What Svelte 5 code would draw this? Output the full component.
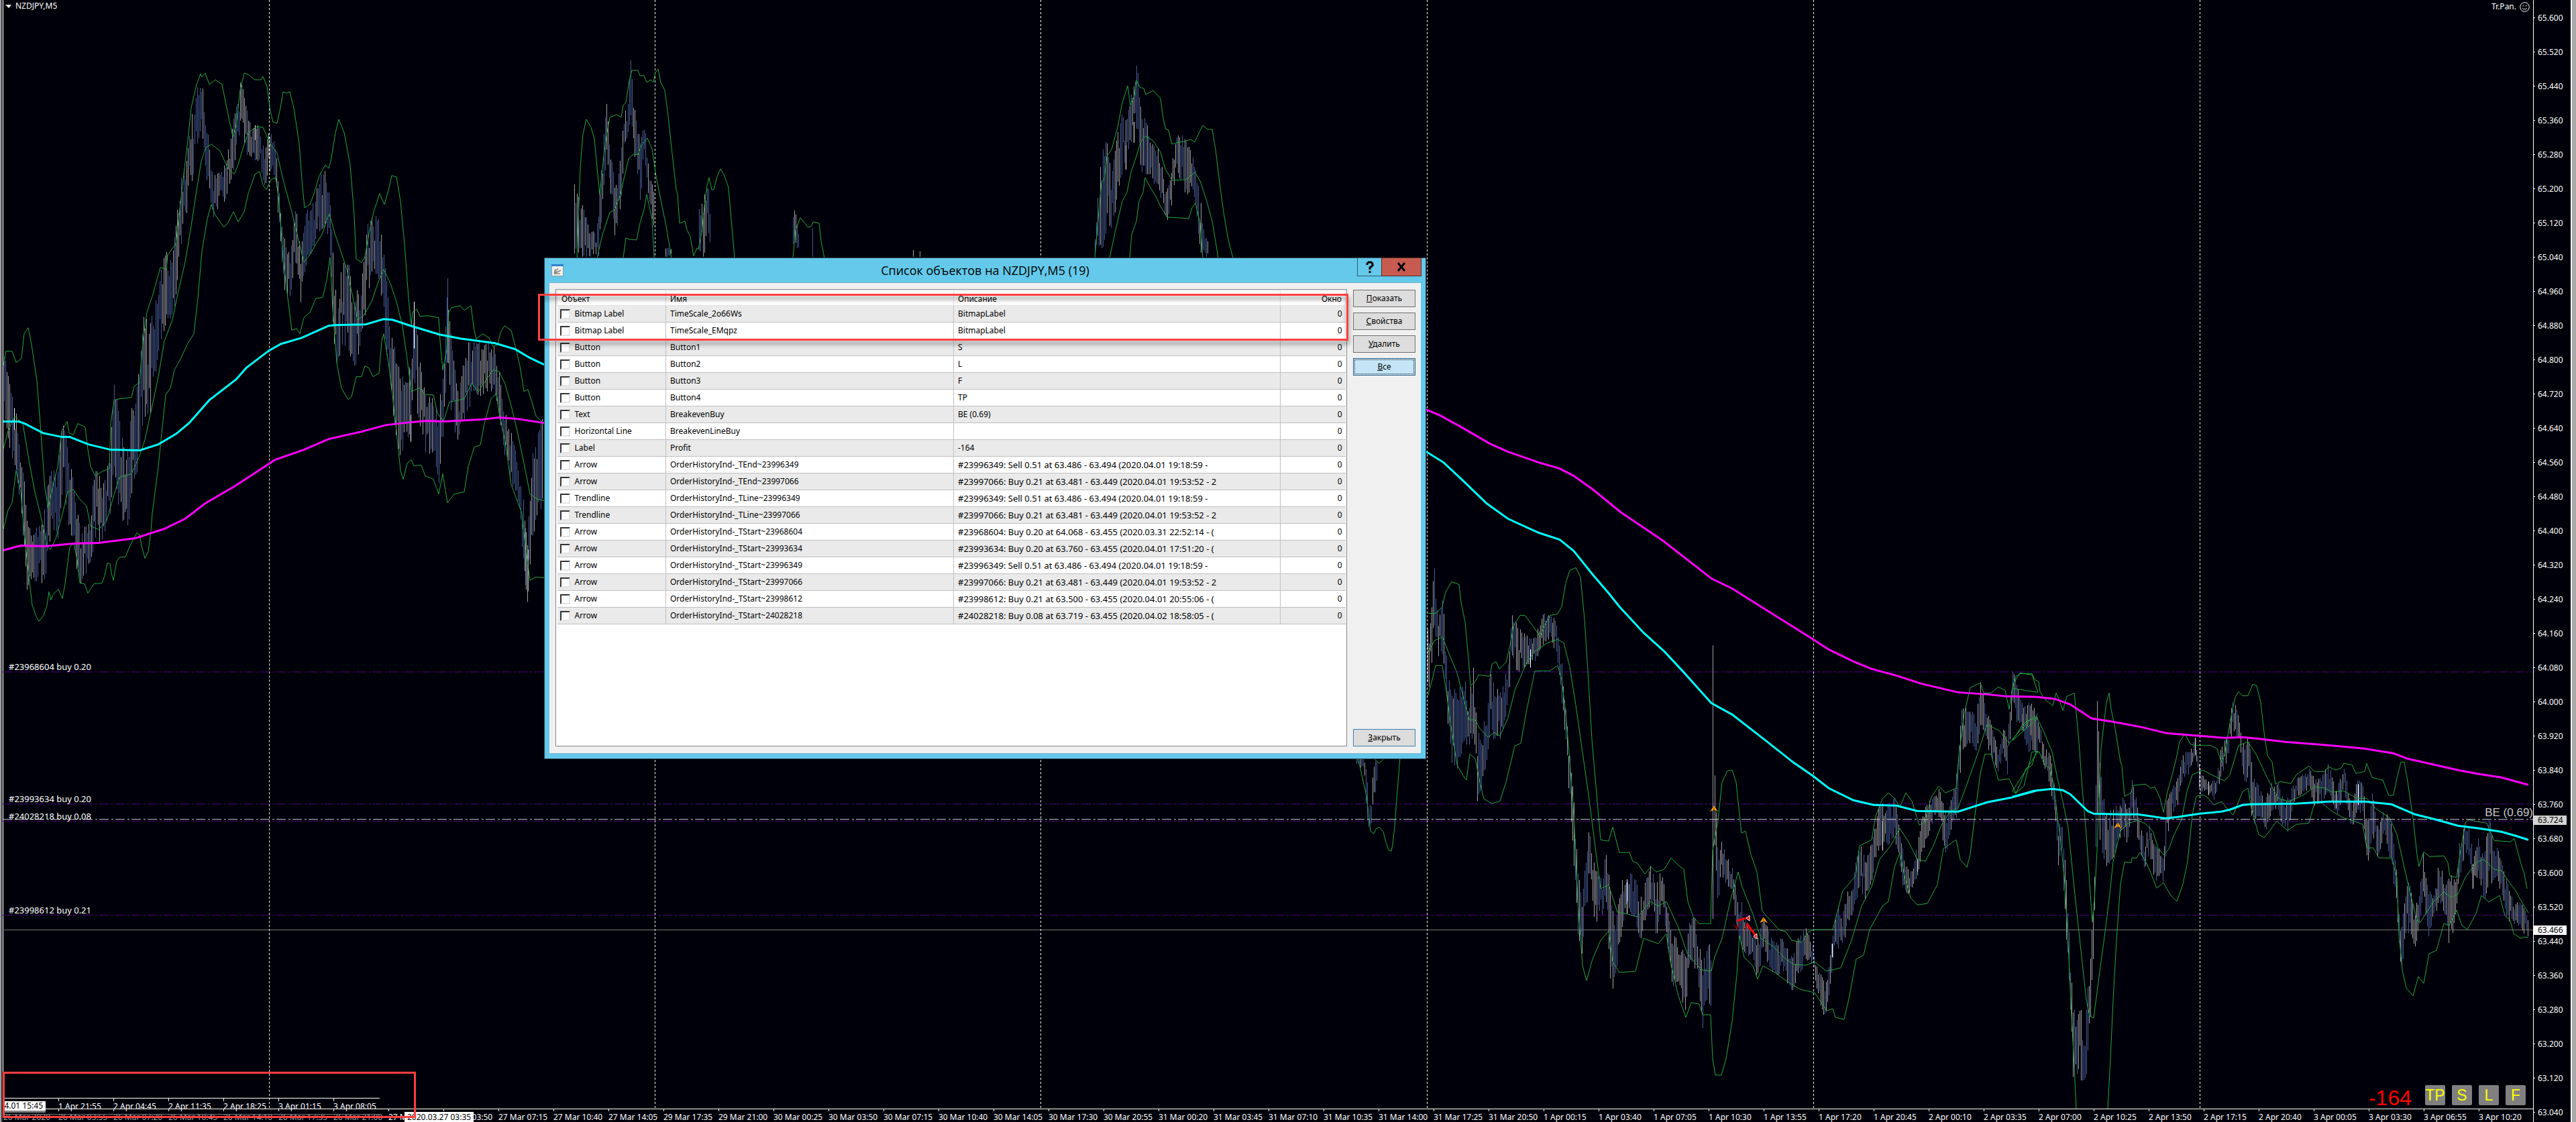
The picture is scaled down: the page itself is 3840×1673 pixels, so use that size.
<script>
  // Plot panels: origin and units per pixel of each traced section of the series.
  const A = { x: 0, y: 0, sx: 1.6333, sy: 1.8667 };
  const B = { x: 0, y: 780, sx: 1.8667, sy: 2.529 };
  const C = { x: 800, y: 0, sx: 1.42545, sy: 3 };
  const D = { x: 2080, y: 580, sx: 1.6333, sy: 1.568 };
  const E = { x: 3000, y: 900, sx: 1.8667, sy: 2.0285 };
  const F = { x: 1980, y: 1060, sx: 3, sy: 3 };

  const px = (p, x) => Math.round(p.x + x / p.sx);
  const py = (p, y) => Math.round(p.y + y / p.sy);
  const points = (p, s) =>
    s.trim().split(/\s+/).map((t) => {
      const [x, y] = t.split(',').map(Number);
      return `${px(p, x)},${py(p, y)}`;
    });
  const line = (...parts) => {
    let all = [];
    for (let i = 0; i < parts.length; i += 2) all = all.concat(points(parts[i], parts[i + 1]));
    return 'M' + all.join('L');
  };

  const bands = [
    line(A, '8,1020 15,978 30,978 40,1010 52,998 58,930 68,912 76,960 90,1060 98,1180 110,1360 118,1415 128,1360 140,1300 150,1200 163,1175 168,1205 178,1212 190,1180 208,1190 213,1240 220,1300 232,1325 250,1312 266,1305 270,1180 278,1115 290,1110 320,1107 326,1075 340,1065 348,950 358,870 372,820 390,745 405,750 408,710 428,680 436,600 446,500 458,390 466,300 478,235 488,205 492,215 500,203 510,235 525,222 540,235 552,300 566,380 575,350 584,250 595,203 605,208 620,222 635,222 640,212 650,240 658,310 665,340 675,343 682,300 690,255 698,259 706,255 716,300 728,400 735,500 742,578 755,570 765,540 778,490 792,460 800,468 806,450 816,370 824,332 838,370 852,460 862,600 868,720 880,732 888,715 898,650 910,590 924,540 936,570 946,530 954,490 966,492 975,560 985,680 995,830 1001,905 1005,870 1015,860 1022,882 1040,880 1068,885 1072,950 1078,1030 1088,975 1092,870 1100,857 1120,852 1130,865 1146,852 1155,920 1160,945 1175,930 1190,940 1200,965 1212,960 1218,925 1228,908 1245,920 1256,970 1265,1020 1275,1090 1285,1085 1295,1120 1305,1160 1325,1180'),
    line(A, '8,1250 20,1200 36,1160 55,1180 70,1280 85,1370 100,1440 115,1520 122,1530 135,1500 150,1440 165,1370 178,1362 195,1390 210,1410 220,1465 240,1475 260,1450 275,1390 290,1330 320,1320 340,1270 352,1225 370,1130 385,1050 400,950 420,890 435,810 450,730 465,630 478,530 490,450 500,412 515,402 535,420 555,470 570,485 580,460 590,420 605,370 625,352 640,355 660,405 675,425 690,500 710,590 725,660 740,730 755,710 770,680 785,650 795,610 802,595 815,650 830,700 845,750 858,820 870,890 885,880 905,840 920,790 935,750 950,790 965,840 980,910 992,1000 1002,1090 1020,1080 1035,1100 1055,1100 1065,1150 1080,1175 1095,1120 1130,1110 1148,1068 1165,1090 1180,1065 1200,1030 1215,1035 1230,1070 1245,1130 1260,1200 1275,1290 1290,1375 1310,1390 1325,1395'),
    line(
      A, '8,1475 20,1420 30,1400 40,1310 50,1370 56,1440',
      B, '65,0 68,40 78,180 90,310 100,355 108,373 122,350 130,310 137,260 141,290 148,270 163,250 173,285 182,230 190,130 195,90 205,78 215,140 223,228 236,230 244,265 262,230 283,228 292,200 299,152 306,155 310,190 316,218 325,145 334,130 350,130 360,90 372,60 380,38 388,45 396,95 404,133 412,110 420,30',
      A, '371,1430 385,1300 395,1190 403,1100 415,1080 425,1030 440,1000 455,960 472,930 482,830 492,700 505,610 515,570 525,600 545,632 555,620 568,590 580,618 595,590 605,540 620,485 632,478 640,515 648,528 660,500 672,495 680,560 690,720 700,830 710,920 722,915 730,930 740,885 755,870 770,830 786,828 795,780 803,717 810,860 820,1010 832,1080 848,1113 856,1105 868,1050 880,1050 888,1020 898,1025 908,1050 922,1040 930,950 935,930 945,1010 955,1100 965,1200 975,1310 982,1335 992,1290 1002,1280 1008,1298 1025,1295 1035,1325 1055,1335 1068,1375 1078,1320 1090,1400 1105,1375 1130,1370 1140,1300 1155,1245 1170,1240 1180,1180 1195,1110 1208,1095 1215,1150 1230,1230 1245,1350 1270,1430',
      B, '1455,0 1460,60 1468,140 1475,218 1490,205 1515,208'
    ),
    line(C, '86,1155 92,750 98,600 105,535 115,570 122,620 128,750 134,870 142,700 148,610 155,525 170,512 180,525 184,470 190,460 196,360 202,316 215,314 220,338 228,338 234,368 242,358 248,370 252,325 258,310 264,370 272,405 280,520 286,660 296,850 300,870 304,1000 315,990 320,1030 326,1060 333,1145 340,1110 344,1115 350,1040 356,920 362,830 367,795 372,850 377,850 384,790 391,755 398,780 408,840 414,980 420,1155'),
    line(C, '545,1155 550,1030 560,975 570,1000 576,1018 583,1015 587,993 600,1000 605,1080 611,1155'),
    line(C, '1186,1155 1192,1010 1200,815 1206,805 1212,700 1222,670 1235,570 1245,460 1256,385 1262,470 1270,430 1275,360 1282,390 1290,395 1294,422 1310,405 1325,440 1332,530 1337,578 1343,582 1350,645 1360,640 1375,633 1390,625 1398,635 1404,610 1416,562 1425,580 1436,580 1443,670 1452,840 1460,950 1470,1075 1480,1155'),
    line(C, '128,1155 140,1050 155,950 165,940 178,870 185,800 195,710 205,690 215,693 222,650 235,618 245,665 254,790 265,910 275,1010 286,1155'),
    line(C, '1217,1155 1230,1030 1245,900 1255,860 1263,770 1275,700 1283,640 1293,610 1310,630 1325,680 1335,755 1350,808 1380,805 1398,772 1410,810 1422,890 1435,990 1448,1155'),
    line(C, '184,1155 190,1065 197,1070 213,1075 220,1000 228,940 234,870 245,980 250,1155'),
    line(C, '1260,1155 1264,1050 1275,990 1280,900 1288,860 1293,795 1300,825 1315,880 1325,925 1340,972 1385,978 1392,930 1400,910 1410,1000 1416,1155'),
    line(F, '130,210 145,260 160,330 170,380 180,460 190,540 203,553 212,530 228,523 245,543 258,590 270,625 281,630 288,600 296,520 306,400 322,210'),
    line(F, '208,218 227,238 245,218'),
    line(
      D, '78,525 100,525 115,510 122,475 137,452 155,458 160,500 170,545 178,630 183,695 195,685 203,670 230,672 236,645 245,638 253,655 270,640 280,600 288,555 303,530 315,530 335,555 352,580 362,555 378,530 395,527 405,510 415,455 424,425 440,418 450,440 460,540 468,660 478,820 488,930 500,1055 520,1058 530,1025 545,1085 570,1085 578,1105 590,1110 608,1135 622,1118 635,1130 655,1125 672,1098 690,1115 703,1125 712,1200 725,1235 740,1252 768,1252 773,1080 785,1010 795,920 808,893 820,892 830,920 842,1040 852,1035 865,1090 880,1130 893,1222 905,1235 920,1250 935,1265 950,1270 965,1290 990,1295 1005,1272 1018,1265 1065,1265 1075,1230 1090,1175 1120,1140 1130,1070 1160,1055 1170,1000 1185,960 1200,945 1215,958 1228,978 1243,945 1258,965 1275,1020 1288,1015 1305,955 1323,930 1340,945 1365,935 1372,860 1385,760 1400,700 1425,688 1433,712 1450,712 1468,697 1485,705 1495,750 1505,690 1520,665 1550,670 1565,710',
      E, '0,258 10,222 22,212 55,214 62,232 72,238 76,268 90,290 112,310 122,272 130,295 140,325 152,282 172,272 178,330 185,420 195,560 205,700 214,850 222,965 228,900 235,750 240,580 247,440 255,350 262,300 268,272 275,320 285,380 300,480 305,490 312,585 330,575 335,552 370,548 385,560 395,555 410,590 420,632 432,570 445,520 455,470 465,420 480,395 495,425 505,430 550,430 570,440 580,480 590,460 600,400 610,330 620,285 630,267 640,280 655,280 668,246 680,250 690,300 700,390 710,460 722,480 732,548 745,540 775,545 790,520 825,492 840,510 870,510 880,495 900,505 915,500 922,485 945,488 955,515 980,510 986,485 1000,528 1030,535 1048,582 1060,580 1070,530 1080,480 1090,480 1100,540 1115,650 1125,760 1132,797 1145,752 1162,767 1200,765 1212,785 1217,825 1235,830 1245,760 1260,665 1270,655 1285,660 1320,665 1340,718 1385,722 1397,712 1415,790 1425,820 1432,865'
    ),
    line(
      D, '78,620 95,590 115,580 130,620 150,665 165,720 180,775 195,775 205,795 225,815 240,805 255,812 275,770 290,705 320,640 340,615 370,595 395,587 410,595 425,650 440,740 455,850 470,950 485,1060 500,1170 520,1160 540,1225 560,1228 590,1235 620,1200 640,1210 660,1200 690,1260 710,1320 745,1360 770,1362 778,1330 795,1285 815,1200 835,1130 845,1165 870,1230 890,1285 920,1305 950,1335 970,1347 1000,1348 1020,1340 1050,1362 1085,1355 1110,1290 1135,1210 1160,1165 1180,1100 1205,1070 1228,1028 1250,1060 1270,1100 1290,1105 1310,1070 1330,1020 1350,990 1370,980 1390,930 1420,850 1440,785 1470,800 1495,830 1520,800 1545,775 1565,770',
      E, '0,415 30,365 65,340 85,385 110,450 125,530 140,600 155,680 165,780 175,900 190,1050 205,1200 215,1250 225,1255 240,1130 255,1010 270,880 280,780 300,690 320,668 350,658 370,668 390,690 405,740 420,760 435,745 450,700 470,655 485,570 500,520 530,505 555,520 590,538 605,520 630,430 655,420 680,460 710,530 740,590 770,600 810,580 840,555 870,560 890,572 920,568 960,590 985,590 1010,620 1050,650 1070,700 1090,800 1105,870 1125,960 1135,965 1150,940 1170,905 1200,875 1220,890 1240,880 1260,830 1290,785 1310,775 1340,805 1360,810 1380,840 1400,870 1420,910 1435,938'
    ),
    line(
      D, '78,720 90,680 98,647 115,648 125,720 135,790 150,880 165,905 173,915 182,855 195,865 205,920 215,960 235,970 255,965 270,920 290,835 305,830 320,750 340,660 375,660 395,647 405,680 415,760 425,870 435,1000 445,1200 455,1350 465,1385 480,1335 500,1290 520,1268 530,1340 545,1365 585,1362 605,1285 640,1298 660,1275 670,1340 690,1420 707,1470 720,1437 740,1440 748,1465 768,1465 773,1568 779,1606 794,1606 806,1568 820,1480 832,1370 838,1280 850,1330 870,1350 882,1382 895,1350 925,1365 950,1385 985,1405 1020,1412 1050,1455 1065,1450 1072,1470 1092,1475 1105,1420 1122,1335 1140,1325 1155,1265 1185,1210 1200,1200 1215,1120 1228,1085 1240,1140 1255,1190 1270,1208 1295,1205 1320,1160 1335,1075 1365,1055 1375,1100 1392,1120 1400,1090 1410,1010 1425,900 1435,855 1450,855 1468,915 1495,912 1510,945 1530,930 1550,850 1565,848',
      E, '0,568 10,576 25,540 38,502 55,490 65,450 75,450 90,490 105,500 115,560 125,650 135,720 145,850 155,1030 165,1250 172,1400 178,1530'
    ),
    line(E, '266,1530 272,1380 280,1200 290,1020 300,850 312,782 330,785 332,770 345,770 355,755 368,775 385,815 402,862 420,845 440,885 458,903 475,850 488,780 500,640 512,585 530,580 545,590 560,610 582,600 600,625 615,640 640,570 655,560 665,620 685,700 700,710 715,690 735,660 765,688 790,670 825,665 840,605 860,605 890,630 920,650 950,660 975,670 985,740 1005,740 1020,770 1055,770 1070,830 1075,1000 1085,1110 1095,1165 1115,1188 1130,1130 1145,1150 1160,1060 1180,1050 1200,970 1215,975 1235,930 1250,975 1265,987 1290,940 1305,885 1325,905 1355,885 1370,945 1385,960 1395,1000 1415,1015 1425,1010 1435,1012')
  ];

  const fast = [
    line(A, '8,1174 45,1174 60,1180 105,1206 150,1217 170,1218 215,1238 270,1252 340,1254 385,1237 430,1208 460,1177 510,1115 575,1056 600,1025 655,976 685,957 735,940 800,907 815,905 890,904 935,889 955,891 1000,908 1070,932 1120,943 1205,955 1255,972 1290,997 1325,1016'),
    line(
      D, '75,148 118,173 170,220 222,268 275,304 350,337 400,353 435,380 480,435 520,478 545,510 605,570 655,615 700,662 770,735 820,762 900,822 970,875 1018,907 1055,935 1115,962 1165,973 1220,976 1270,988 1370,989 1440,968 1500,957 1565,939',
      E, '0,586 60,567 110,561 140,566 160,578 210,628 225,636 300,638 350,639 425,651 460,648 520,637 580,630 605,625 640,611 660,608 790,607 880,600 980,600 1055,608 1120,638 1180,655 1240,673 1300,682 1360,691 1400,703 1436,716'
    )
  ];
  const slow = [
    line(A, '8,1532 50,1520 110,1521 180,1513 240,1512 330,1499 400,1472 450,1444 500,1402 570,1356 655,1292 670,1281 740,1252 800,1223 880,1202 940,1183 1000,1176 1040,1173 1080,1175 1170,1168 1215,1163 1260,1166 1325,1177'),
    line(
      D, '75,48 110,62 160,90 230,128 275,147 350,172 400,187 435,204 480,235 550,290 650,355 770,443 820,468 1018,587 1055,610 1115,638 1160,655 1220,671 1280,690 1370,710 1440,715 1490,719 1565,722',
      E, '0,281 70,285 120,291 160,306 220,348 280,360 360,375 430,393 520,401 590,407 640,406 680,410 760,420 880,431 980,441 1060,454 1100,470 1140,481 1240,506 1300,517 1360,528 1436,550'
    )
  ];

  // Trading range keyframes: x, high, low.
  const ranges = [
    [A, '8,970,1130 25,1080,1260 38,1130,1310 50,1280,1420 58,1330,1567 65,1440,1650 80,1490,1620 95,1450,1630 105,1450,1640 115,1340,1600 125,1300,1470 140,1310,1500 152,1150,1360 165,1240,1460 180,1350,1540 195,1430,1640 205,1450,1600 218,1450,1610 230,1290,1520 250,1350,1500 268,1250,1440 277,1040,1300 290,1170,1440 305,1280,1480 320,1130,1450 335,1060,1300 348,880,1180 365,870,1170 375,860,1060 390,740,950 405,700,900 418,720,940 430,600,800 440,500,690 455,420,600 468,300,500 480,240,400 492,230,370 500,310,480 510,400,560 520,490,610 535,480,570 548,450,560 562,380,500 575,270,450 587,215,330 600,290,440 615,350,460 630,350,450 642,410,520 652,370,500 660,370,470 672,410,540 680,530,680 690,650,800 705,710,840 720,560,730 732,700,860 745,580,760 760,570,720 775,490,650 795,460,630 803,560,760 810,700,930 820,850,1040 835,700,960 850,730,980 862,820,1040 880,770,950 895,620,830 908,590,740 925,610,800 938,730,960 950,900,1080 960,960,1200 975,1050,1280 985,1050,1230 998,1000,1230 1008,850,1080 1020,980,1200 1035,1100,1270 1055,1110,1260 1068,1130,1350 1080,1010,1200 1090,780,1010 1100,960,1170 1115,1100,1240 1135,950,1150 1155,950,1110 1175,940,1110 1195,960,1090 1208,960,1130 1225,1130,1260 1245,1190,1370 1262,1290,1410 1275,1400,1600 1284,1500,1680 1295,1270,1500 1310,1200,1440 1323,1150,1400'],
    [C, '78,780,1150 95,900,1150 110,1000,1150 125,1040,1150 133,900,1150 140,650,900 148,460,700 156,650,850 165,800,1070 178,700,960 186,500,660 194,440,600 199,250,520 204,400,600 212,560,820 220,620,930 228,530,680 236,700,880 245,770,990 249,900,1150'],
    [C, '272,1110,1150 288,1105,1150'],
    [C, '344,920,1150 355,880,1150 363,820,1060 371,940,1150'],
    [C, '545,950,1150 550,930,1100 558,1050,1150'],
    [C, '1186,1060,1150 1195,780,1100 1205,650,1130 1212,600,1000 1220,780,1050 1230,650,940 1240,500,800 1250,540,740 1262,430,640 1270,360,620 1276,270,560 1285,520,780 1293,520,780 1305,640,820 1320,660,830 1330,760,960 1342,850,990 1352,700,900 1362,590,780 1378,610,890 1392,680,840 1402,780,1020 1412,930,1150 1420,1050,1150 1427,1080,1150'],
    [F, '125,200,250 158,200,260 172,270,470 180,420,530 188,410,570 196,320,460 208,220,380 218,215,330'],
    [D, '78,560,730 85,540,680 94,405,580 105,540,640 116,480,620 125,640,780 135,700,880 150,700,890 165,650,840 178,730,840 190,650,820 200,780,990 208,830,950 220,740,900 230,660,810 245,700,830 260,700,820 275,640,740 282,525,640 300,560,670 320,570,650 340,580,640 360,525,600 375,520,600 390,540,620 402,610,700 415,740,840 425,850,1000 435,950,1130 445,1130,1280 455,1190,1330 465,1060,1230 472,1000,1140 485,1120,1250 500,1140,1240 515,1080,1200 525,1190,1420 535,1260,1380 545,1150,1300 565,1130,1220 585,1140,1240 595,1200,1300 610,1150,1240 622,1105,1200 635,1160,1290 648,1110,1200 660,1210,1310 675,1270,1400 690,1290,1390 705,1320,1470 720,1200,1340 735,1270,1370 748,1340,1500 760,1290,1420 771,1300,1470'],
    [D, '776,860,1140 785,1110,1210 795,1040,1150 805,1090,1160 820,1120,1180 832,1190,1270 842,1200,1310 855,1240,1330 870,1260,1330 880,1290,1380 895,1230,1330 910,1270,1350 925,1300,1380 940,1280,1370 965,1330,1410 980,1280,1390 1000,1260,1340 1015,1290,1350 1025,1350,1410 1045,1390,1480 1055,1350,1420 1065,1270,1340 1075,1205,1310 1090,1230,1310 1100,1180,1260 1115,1130,1220 1130,1060,1170 1145,1100,1200 1160,1060,1150 1172,970,1080 1185,970,1080 1200,970,1070 1215,950,1050 1228,1030,1120 1240,1110,1200 1255,1120,1180 1270,1070,1140 1285,980,1080 1305,960,1020 1325,930,1010 1340,990,1100 1355,950,1020 1368,880,1000 1378,740,860 1395,750,830 1415,760,850 1426,665,780 1435,740,830 1455,800,870 1468,850,900 1480,780,850 1490,830,910 1503,640,740 1520,720,790 1540,760,850 1564,770,850'],
    [E, '2,180,300 12,290,360 30,300,390 50,300,400 65,320,400 85,420,490 105,460,560 115,530,640 125,640,800 137,650,770 147,800,990 158,1020,1200 168,1180,1450 175,1260,1430 188,1210,1440 197,1320,1490 205,1230,1440 215,1060,1290 225,900,1100 235,300,640 245,500,740 260,640,800 275,620,780 290,610,750 305,580,700 320,620,730 335,520,640 350,620,720 365,710,810 380,670,770 395,730,840 410,740,840 420,740,850 430,590,720 445,560,640 460,530,610 475,440,530 490,450,520 507,410,460 520,500,580 545,545,580 565,530,600 580,430,520 600,400,480 612,280,380 630,340,420 645,440,550 656,380,530 668,520,690 685,550,640 700,600,700 720,540,640 740,545,630 760,600,720 780,540,620 800,520,580 825,500,570 840,530,620 860,520,600 880,480,570 900,570,650 922,490,580 945,620,690 960,520,640 975,550,640 987,660,800 1000,570,700 1015,670,780 1035,620,700 1055,670,800 1070,820,960 1080,1000,1130 1092,870,1040 1105,830,1000 1118,940,1050 1135,830,980 1143,740,900 1158,880,1010 1175,830,940 1190,780,920 1205,850,960 1216,820,1060 1228,830,990 1240,740,870 1255,680,780 1268,645,750 1282,770,870 1295,710,820 1312,770,900 1325,620,850 1345,730,850 1362,790,890 1375,840,960 1392,900,980 1410,900,980 1425,920,1010 1435,965,1010']
  ];

  let seed = 7;
  const rnd = () => {
    seed = (seed * 1103515245 + 12345) % 2147483648;
    return seed / 2147483648;
  };
  let up = '';
  let down = '';
  for (const [p, s] of ranges) {
    const k = s.split(' ').map((t) => {
      const [x, a, b] = t.split(',').map(Number);
      return [px(p, x), py(p, a), py(p, b)];
    });
    for (let i = 0; i < k.length - 1; i++) {
      const [x0, a0, b0] = k[i];
      const [x1, a1, b1] = k[i + 1];
      for (let x = x0 + (x0 % 2); x < x1; x += 2) {
        const t = (x - x0) / (x1 - x0);
        const hi = a0 + (a1 - a0) * t;
        const span = b0 + (b1 - b0) * t - hi;
        const h = span * (0.45 + 0.55 * rnd());
        const top = Math.round(hi + (span - h) * rnd());
        const d = `M${x + 0.5} ${top}v${Math.max(3, Math.round(h))}`;
        if (rnd() < 0.48) up += d;
        else down += d;
      }
    }
  }
  const bar = (p, x, a, b) => `M${px(p, x) + 0.5} ${py(p, a)}V${py(p, b)}`;
  up += bar(D, 773, 600, 1240) + bar(C, 800, 1120, 1150) + bar(C, 814, 1125, 1150) + bar(E, 235, 296, 600) + bar(B, 1470, 100, 258);
  down += bar(C, 586, 1022, 1150) + bar(B, 1462, 20, 235) + bar(A, 1090, 775, 1010);
  const strong = [
    [A, 35, 1137, 1197], [A, 620, 350, 390], [A, 1008, 840, 970], [A, 999, 1155, 1230],
    [C, 1251, 650, 758], [C, 1268, 545, 640],
    [D, 328, 610, 652], [D, 564, 1148, 1228], [D, 1185, 1012, 1080], [D, 1063, 1298, 1330], [D, 1270, 1100, 1130],
    [E, 507, 408, 460], [E, 545, 540, 580], [E, 899, 567, 620], [E, 962, 547, 610], [E, 1280, 790, 865]
  ].map((r) => bar(...r)).join('');

  const days = [401, 976, 1551, 2127, 2703, 3279];
  const orders = [
    { y: 1002, text: '#23968604 buy 0.20' },
    { y: 1199, text: '#23993634 buy 0.20' },
    { y: 1225, text: '#24028218 buy 0.08' },
    { y: 1365, text: '#23998612 buy 0.21' }
  ];
  const buys = [[2555, 1202], [2629, 1368], [3157, 1227]];

  const prices = Array.from({ length: 33 }, (_, i) => (65.6 - i * 0.08).toFixed(3));

  const times = Array.from({ length: 46 }, (_, i) => {
    if (i === 0) return '26 Mar 2020';
    // The week closes on Friday 27 March and reopens two days and one bar later.
    const m = 30 + i * 205 + (i >= 12 ? 2885 : 0);
    const shown = i >= 14 ? m - 0 : m;
    const t = new Date(Date.UTC(2020, 2, 26, 0, shown));
    const pad = (n) => String(n).padStart(2, '0');
    return `${t.getUTCDate()} ${t.getUTCMonth() === 2 ? 'Mar' : 'Apr'} ${pad(t.getUTCHours())}:${pad(t.getUTCMinutes())}`;
  });
  const overlayTimes = ['', '1 Apr 21:55', '2 Apr 04:45', '2 Apr 11:35', '2 Apr 18:25', '3 Apr 01:15', '3 Apr 08:05'];

  const S1 = '#23996349: Sell 0.51 at 63.486 - 63.494 (2020.04.01 19:18:59 -';
  const S2 = '#23997066: Buy 0.21 at 63.481 - 63.449 (2020.04.01 19:53:52 - 2';
  const objects = [
    ['Bitmap Label', 'TimeScale_2o66Ws', 'BitmapLabel'],
    ['Bitmap Label', 'TimeScale_EMqpz', 'BitmapLabel'],
    ['Button', 'Button1', 'S'],
    ['Button', 'Button2', 'L'],
    ['Button', 'Button3', 'F'],
    ['Button', 'Button4', 'TP'],
    ['Text', 'BreakevenBuy', 'BE (0.69)'],
    ['Horizontal Line', 'BreakevenLineBuy', ''],
    ['Label', 'Profit', '-164'],
    ['Arrow', 'OrderHistoryInd-_TEnd~23996349', S1],
    ['Arrow', 'OrderHistoryInd-_TEnd~23997066', S2],
    ['Trendline', 'OrderHistoryInd-_TLine~23996349', S1],
    ['Trendline', 'OrderHistoryInd-_TLine~23997066', S2],
    ['Arrow', 'OrderHistoryInd-_TStart~23968604', '#23968604: Buy 0.20 at 64.068 - 63.455 (2020.03.31 22:52:14 - ('],
    ['Arrow', 'OrderHistoryInd-_TStart~23993634', '#23993634: Buy 0.20 at 63.760 - 63.455 (2020.04.01 17:51:20 - ('],
    ['Arrow', 'OrderHistoryInd-_TStart~23996349', S1],
    ['Arrow', 'OrderHistoryInd-_TStart~23997066', S2],
    ['Arrow', 'OrderHistoryInd-_TStart~23998612', '#23998612: Buy 0.21 at 63.500 - 63.455 (2020.04.01 20:55:06 - ('],
    ['Arrow', 'OrderHistoryInd-_TStart~24028218', '#24028218: Buy 0.08 at 63.719 - 63.455 (2020.04.02 18:58:05 - (']
  ];
</script>

<main class="terminal">
  <div class="edge-left"></div>

  <section class="chart" aria-label="NZDJPY,M5">
    <svg class="plot" viewBox="4 0 3772 1654" preserveAspectRatio="none" aria-hidden="true">
      <g class="crisp">
        {#each orders as o}
          <path class="order" d="M4 {o.y + 0.5}H3776" />
        {/each}
        <path class="price" d="M4 1387.5H3776" />
        <path class="down" d={down} />
        <path class="up" d={up} />
        <path class="strong" d={strong} />
        {#each days as x}
          <path class="day" d="M{x + 0.5} 0V1654" />
        {/each}
        {#each bands as d}
          <path class="band" {d} />
        {/each}
        <path class="breakeven" d="M4 1222.5H3776" />
      </g>
      {#each slow as d}
        <path class="slow" {d} />
      {/each}
      {#each fast as d}
        <path class="fast" {d} />
      {/each}
      {#each buys as [x, y]}
        <path class="buy" d="M{x} {y}l-6 9 6-3 6 3z" />
        <path class="buy-edge" d="M{x} {y}v6l6 3" />
      {/each}
      <path class="trade" d="M2589 1374l17-5M2604 1378l14 19" />
      <path class="trade-mark" d="M2584 1379l5 7 4-8M2589 1386v-6M2599 1389l4-9 6 8M2603 1380v6" />
      <path class="exit" d="M2608 1366v8l-5-4zM2619 1393v8l-5-4z" />
      <path class="menu" d="M8 7h9l-4 5z" />
      {#each orders as o}
        <text class="label" x="13" y={o.y - 2}>{o.text}</text>
      {/each}
    </svg>

    <h1 class="symbol">NZDJPY,M5</h1>
    <div class="panel-tag">
      Tr.Pan.
      <svg width="15" height="15" viewBox="0 0 15 15" aria-hidden="true">
        <circle cx="7.5" cy="7.5" r="6.8" />
        <path d="M5.2 4.5v2M9.8 4.5v2M4 9q3.5 4 7 0" />
      </svg>
    </div>
    <div class="be">BE (0.69)</div>
    <div class="trade-bar">
      <output class="profit">-164</output>
      <button>TP</button>
      <button>S</button>
      <button>L</button>
      <button>F</button>
    </div>
  </section>

  <aside class="prices" aria-label="Price scale">
    {#each prices as p}
      <div class="tick">{p}</div>
    {/each}
    <div class="tag tag-be">63.724</div>
    <div class="tag tag-bid">63.466</div>
  </aside>
  <div class="edge-right"></div>

  <footer class="times">
    {#each times as t, i}
      <div class="time" class:covered={i < 7}>{t}</div>
    {/each}
    <div class="cursor-time">2020.03.27 03:35</div>
  </footer>

  <div class="scale-overlay">
    {#each overlayTimes as t}
      <div class="cell">{t}</div>
    {/each}
    <div class="overlay-cursor"><span>4.01 15:45</span></div>
  </div>
  <div class="mark mark-scale"></div>

  <section class="dialog" aria-labelledby="title">
    <header>
      <svg class="app" width="18" height="18" viewBox="0 0 18 18" aria-hidden="true">
        <rect x=".5" y=".5" width="17" height="17" fill="#f4f1ea" stroke="#8d9aa6" />
        <path d="M0 0h18v3H0z" fill="#2e7fd0" />
        <path d="M4 14l2-7M4 14l6-8M4 14l10-5M4 14h9" stroke="#888" stroke-width="1.4" fill="none" />
      </svg>
      <h2 id="title">Список объектов на NZDJPY,M5 (19)</h2>
      <div class="caption">
        <button class="help" aria-label="Справка">
          <svg width="14" height="18" viewBox="0 0 14 18" aria-hidden="true"><path d="M3 6V4l2-2h4l2 2v3L7 10v3M7 15v3" /></svg>
        </button>
        <button class="close" aria-label="Закрыть окно">
          <svg width="14" height="14" viewBox="0 0 14 14" aria-hidden="true"><path d="M2 1l10 12M12 1L2 13" /></svg>
        </button>
      </div>
    </header>
    <div class="client">
      <div class="list">
        <table>
          <colgroup><col class="c1" /><col class="c2" /><col /><col class="c4" /></colgroup>
          <thead>
            <tr><th>Объект</th><th>Имя</th><th>Описание</th><th class="num">Окно</th></tr>
          </thead>
          <tbody>
            {#each objects as [type, name, text]}
              <tr>
                <td><label><input type="checkbox" />{type}</label></td>
                <td>{name}</td>
                <td class:deal={text.startsWith('#')}>{text}</td>
                <td class="num">0</td>
              </tr>
            {/each}
          </tbody>
        </table>
      </div>
      <div class="actions">
        <button><u>П</u>оказать</button>
        <button><u>С</u>войства</button>
        <button><u>У</u>далить</button>
        <button class="focused"><u>В</u>се</button>
        <button class="default"><u>З</u>акрыть</button>
      </div>
    </div>
  </section>
  <div class="mark mark-rows"></div>
</main>

<style>
  :global(body) {
    background: #00000a;
  }
  .terminal {
    position: relative;
    display: grid;
    grid-template: minmax(0, 1fr) 19px / 4px minmax(0, 1fr) 56px 8px;
    height: 100vh;
    overflow: hidden;
    background: #00000a;
    color: #fff;
    font: 12px/16px 'Noto Sans', 'Open Sans', sans-serif;
  }
  .terminal * {
    box-sizing: border-box;
  }
  .edge-left {
    grid-area: 1 / 1 / 3 / 2;
    background: #303236;
    border-left: 2px solid #a0a0a0;
  }
  .edge-right {
    grid-area: 1 / 4 / 3 / 5;
    background: #a9a9a9;
    border-left: 2px solid #f0f0f0;
  }
  .chart {
    grid-area: 1 / 2;
    position: relative;
    border-bottom: 1px solid #fff;
    box-shadow: inset 1px 0 #fff;
  }
  .plot {
    position: absolute;
    inset: 0;
    width: 100%;
    height: 100%;
  }
  .plot path {
    fill: none;
  }
  .crisp {
    shape-rendering: crispEdges;
  }
  .plot .up {
    stroke: #a0a0a3;
  }
  .plot .down {
    stroke: #465c92;
  }
  .plot .strong {
    stroke: #fff;
  }
  .plot .band {
    stroke: #22a93f;
  }
  .plot .day {
    stroke: #fff;
    stroke-dasharray: 3 3;
  }
  .plot .order {
    stroke: #4b0082;
    stroke-dasharray: 14 4 3 3;
  }
  .plot .breakeven {
    stroke: #d3d3d3;
    stroke-dasharray: 14 4 3 3;
  }
  .plot .price {
    stroke: #77777c;
  }
  .plot .fast {
    stroke: #0ff;
    stroke-width: 3;
  }
  .plot .slow {
    stroke: #f0f;
    stroke-width: 3;
  }
  .plot .buy {
    fill: #ffa010;
  }
  .plot .buy-edge {
    stroke: #7a4a10;
  }
  .plot .trade {
    stroke: #f00;
    stroke-width: 3;
  }
  .plot .trade-mark {
    stroke: #c01010;
  }
  .plot .exit {
    fill: #f00;
    stroke: #fff;
  }
  .plot .menu,
  .plot .label {
    fill: #fff;
    font-size: 13px;
  }
  .symbol {
    position: absolute;
    left: 19px;
    top: 1px;
    margin: 0;
    font: inherit;
  }
  .panel-tag {
    position: absolute;
    right: 5px;
    top: 2px;
    display: flex;
    align-items: center;
    gap: 5px;
  }
  .panel-tag svg {
    fill: none;
    stroke: #fff;
  }
  .be {
    position: absolute;
    right: 0;
    top: 1202px;
    color: #c6c6c6;
    font: 17px/20px 'Liberation Sans', sans-serif;
  }
  .trade-bar {
    position: absolute;
    right: 11px;
    bottom: 5px;
    display: flex;
    align-items: center;
    gap: 10px;
    font-family: 'Liberation Sans', sans-serif;
  }
  .profit {
    margin: 8px 10px 0 0;
    color: #f00;
    font-size: 32px;
    line-height: 22px;
  }
  .trade-bar button {
    width: 30px;
    height: 30px;
    padding: 0;
    border: 0;
    border-radius: 2px;
    background: #808080;
    color: #ff0;
    font: 23px/30px 'Liberation Sans', sans-serif;
  }
  .prices {
    grid-area: 1 / 3 / 3 / 4;
    position: relative;
    padding-top: 1px;
    border-left: 1px solid #fff;
    overflow: hidden;
  }
  .tick {
    display: flex;
    align-items: center;
    gap: 4px;
    height: 51px;
  }
  .tick::before {
    content: '';
    width: 2px;
    height: 1px;
    background: #fff;
  }
  .tag {
    position: absolute;
    left: 0;
    right: 6px;
    height: 14px;
    padding-left: 6px;
    color: #000;
    line-height: 14px;
  }
  .tag-be {
    top: 1216px;
    background: #d3d3d3;
  }
  .tag-bid {
    top: 1380px;
    background: #fff;
  }
  .times {
    grid-area: 2 / 2;
    position: relative;
    display: flex;
    padding-left: 1px;
    overflow: hidden;
    line-height: 14px;
  }
  .time {
    position: relative;
    flex: none;
    width: 82px;
    padding-top: 5px;
    white-space: nowrap;
  }
  .time::before {
    content: '';
    position: absolute;
    left: 0;
    top: 0;
    width: 1px;
    height: 3px;
    background: #fff;
  }
  .time.covered {
    color: #a0a0a0;
  }
  .cursor-time {
    position: absolute;
    left: 599px;
    top: 4px;
    padding: 1px 4px 0;
    background: #fff;
    color: #000;
  }
  .scale-overlay {
    position: absolute;
    left: 5px;
    bottom: 11px;
    display: flex;
    width: 561px;
    height: 25px;
    border-top: 1px solid #fff;
    border-bottom: 1px solid #77777a;
  }
  .cell {
    position: relative;
    flex: none;
    width: 82px;
    padding-top: 4px;
    white-space: nowrap;
  }
  .cell::before {
    content: '';
    position: absolute;
    left: 0;
    top: 0;
    width: 1px;
    height: 4px;
    background: #fff;
  }
  .overlay-cursor {
    position: absolute;
    left: 0;
    top: 4px;
    display: flex;
    justify-content: flex-end;
    width: 63px;
    height: 17px;
    padding-right: 4px;
    overflow: hidden;
    background: #fff;
    border-bottom: 3px solid #808080;
    color: #000;
    line-height: 14px;
    white-space: nowrap;
  }
  .mark {
    position: absolute;
    border: 3px solid #ff4040;
    pointer-events: none;
  }
  .mark-scale {
    left: 4px;
    bottom: 6px;
    width: 616px;
    height: 69px;
  }
  .mark-rows {
    left: 802px;
    top: 438px;
    width: 1208px;
    height: 70px;
    filter: drop-shadow(1px 5px 3px rgba(0, 0, 0, 0.5));
  }
  .dialog {
    position: absolute;
    left: 811px;
    top: 384px;
    display: flex;
    flex-direction: column;
    width: 1315px;
    height: 748px;
    padding: 0 7px 7px;
    border: 1px solid #2b4650;
    background: #64c9ea;
    color: #000;
  }
  header {
    position: relative;
    display: flex;
    flex: none;
    align-items: center;
    height: 36px;
    padding-left: 3px;
  }
  h2 {
    flex: 1;
    margin: 0 21px 0 0;
    text-align: center;
    font: 18px/24px 'Open Sans', 'Noto Sans', sans-serif;
  }
  .caption {
    position: absolute;
    right: -1px;
    top: -1px;
    display: flex;
  }
  .caption button {
    display: grid;
    place-items: center;
    width: 37px;
    height: 28px;
    padding: 0;
    border: 1px solid #2f5a6a;
    background: none;
  }
  .caption .close {
    width: 60px;
    margin-left: -1px;
    border-color: #5d2c28;
    background: #c75b50;
  }
  .caption path {
    fill: none;
    stroke: #000;
    stroke-width: 3;
  }
  .client {
    display: flex;
    flex: 1;
    gap: 9px;
    min-height: 0;
    padding: 9px 8px 10px 9px;
    border: 1px solid #7fb4cb;
    border-width: 1px 0;
    background: #f0f0f0;
  }
  .list {
    flex: 1;
    padding: 1px;
    border: 1px solid #828790;
    background: #fff;
  }
  table {
    width: 100%;
    table-layout: fixed;
    border-collapse: collapse;
  }
  .c1 {
    width: 162px;
  }
  .c2 {
    width: 429px;
  }
  .c4 {
    width: 97px;
  }
  th {
    height: 22px;
    padding: 2px 6px 0;
    border: 1px solid #e0e0e0;
    font-weight: 400;
    line-height: 16px;
    text-align: left;
  }
  td {
    height: 25px;
    padding: 0 6px;
    border-right: 1px solid #c0c0c0;
    border-bottom: 1px solid #c0c0c0;
    white-space: nowrap;
    overflow: hidden;
  }
  td:first-child {
    padding-left: 4px;
  }
  td:last-child {
    border-right: 0;
  }
  td.deal {
    font-size: 13px;
  }
  tbody tr:nth-child(odd) {
    background: #eaeaea;
  }
  th.num,
  td.num {
    padding-right: 5px;
    text-align: right;
  }
  label {
    display: flex;
    align-items: center;
    gap: 7px;
  }
  input {
    appearance: none;
    width: 15px;
    height: 15px;
    margin: 0;
    border: 2px solid;
    border-color: #333 #e3e3e3 #e3e3e3 #333;
    background: #fff;
  }
  .actions {
    display: flex;
    flex-direction: column;
    gap: 8px;
    width: 93px;
    padding-top: 1px;
  }
  .actions button {
    height: 26px;
    padding: 0;
    border: 1px solid #707070;
    background: #dddddd;
    color: #000;
    font: inherit;
  }
  .actions .focused {
    border-color: #2c628b;
    background: #c4e5f6;
    outline: 1px dotted #222;
    outline-offset: -3px;
  }
  .actions .default {
    margin-top: auto;
    border-color: #3c7fb1;
  }
</style>
